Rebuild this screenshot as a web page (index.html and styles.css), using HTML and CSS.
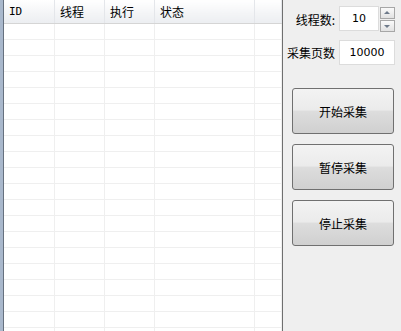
FILE: index.html
```html
<!DOCTYPE html>
<html lang="zh">
<head>
    <meta charset="UTF-8">
    <title>采集</title>
    <link rel="stylesheet" href="styles.css">
</head>
<body>
<div class="window">
    <div class="edge"></div>
    <div class="grid">
        <table class="task-table">
            <thead>
            <tr>
                <th class="c-id">ID</th>
                <th class="c-thread">线程</th>
                <th class="c-run">执行</th>
                <th class="c-state">状态</th>
                <th class="c-rest"></th>
            </tr>
            </thead>
            <tbody id="task-rows">
            </tbody>
        </table>
    </div>
    <div class="panel">
        <div class="field">
            <span class="label">线程数:</span>
            <div class="spin">
                <div class="input">10</div>
                <div class="spin-btns">
                    <span class="spin-up"></span>
                    <span class="spin-down"></span>
                </div>
            </div>
        </div>
        <div class="field">
            <span class="label">采集页数</span>
            <div class="input wide">10000</div>
        </div>
        <div class="buttons">
            <button class="btn">开始采集</button>
            <button class="btn">暂停采集</button>
            <button class="btn">停止采集</button>
        </div>
    </div>
</div>
<script>
    // 空白行
    const rows = document.getElementById('task-rows');
    for (let i = 0; i < 20; i++) {
        const tr = document.createElement('tr');
        for (let j = 0; j < 5; j++) {
            tr.appendChild(document.createElement('td'));
        }
        rows.appendChild(tr);
    }
</script>
</body>
</html>
```

FILE: styles.css
```css
body {
    margin: 0;
    padding: 0;
    font-family: "Noto Sans CJK SC", "DejaVu Sans", sans-serif;
    font-size: 12px;
    color: #000;
    overflow: hidden;
}

.window {
    display: flex;
    width: 401px;
    height: 331px;
    background-color: #efefef;
}

.edge {
    width: 3px;
    background-color: #a9b8cc;
    border-right: 1px solid #66717f;
}

.grid {
    width: 278px;
    background-color: #fff;
    border-right: 1px solid #6f6f6f;
    overflow: hidden;
}

.task-table {
    border-collapse: collapse;
    table-layout: fixed;
    width: 278px;
}

.task-table th {
    height: 23px;
    padding: 0 0 0 5px;
    text-align: left;
    font-weight: normal;
    background: linear-gradient(#ffffff, #f3f4f6 60%, #eceef1);
    border-right: 1px solid #e4e6ea;
    border-bottom: 1px solid #d5d5d5;
    line-height: 23px;
}

.task-table th.c-id {
    font-family: "DejaVu Sans Mono", monospace;
    font-size: 11px;
}

.task-table td {
    height: 15px;
    padding: 0;
    border-right: 1px solid #efefef;
    border-bottom: 1px solid #efefef;
}

.c-id { width: 45px; }
.c-thread { width: 44px; }
.c-run { width: 44px; }
.c-state { width: 94px; }

.panel {
    flex: 1;
    display: flex;
    flex-direction: column;
    padding-top: 6px;
}

.field {
    display: flex;
    align-items: center;
    margin-bottom: 7px;
}

.label {
    width: 52px;
    text-align: right;
    margin-right: 4px;
    font-size: 12px;
}

.spin {
    display: flex;
}

.input {
    width: 38px;
    height: 23px;
    line-height: 23px;
    text-align: center;
    background-color: #fff;
    border: 1px solid #dcdcdc;
    font-family: "DejaVu Sans", sans-serif;
    font-size: 11px;
}

.input.wide {
    width: 54px;
}

.spin-btns {
    display: flex;
    flex-direction: column;
    margin-left: 1px;
    padding-top: 1px;
}

.spin-btns span {
    width: 13px;
    height: 10px;
    margin-bottom: 1px;
    border: 1px solid #a7a7a7;
    background: linear-gradient(#fafafa, #e2e2e2);
    position: relative;
}

.spin-btns span::after {
    content: "";
    position: absolute;
    left: 3px;
    border-left: 3px solid transparent;
    border-right: 3px solid transparent;
}

.spin-up::after {
    top: 3px;
    border-bottom: 3px solid #6e7a8a;
}

.spin-down::after {
    top: 4px;
    border-top: 3px solid #6e7a8a;
}

.buttons {
    display: flex;
    flex-direction: column;
    gap: 10px;
    margin-top: 16px;
    padding-left: 9px;
}

.btn {
    width: 102px;
    height: 46px;
    padding: 0;
    border: 1px solid #707070;
    border-radius: 3px;
    background: linear-gradient(#f3f3f3, #ebebeb 48%, #dddddd 50%, #d0d0d0);
    font-family: "Noto Sans CJK SC", sans-serif;
    font-size: 12px;
    color: #000;
}
```
